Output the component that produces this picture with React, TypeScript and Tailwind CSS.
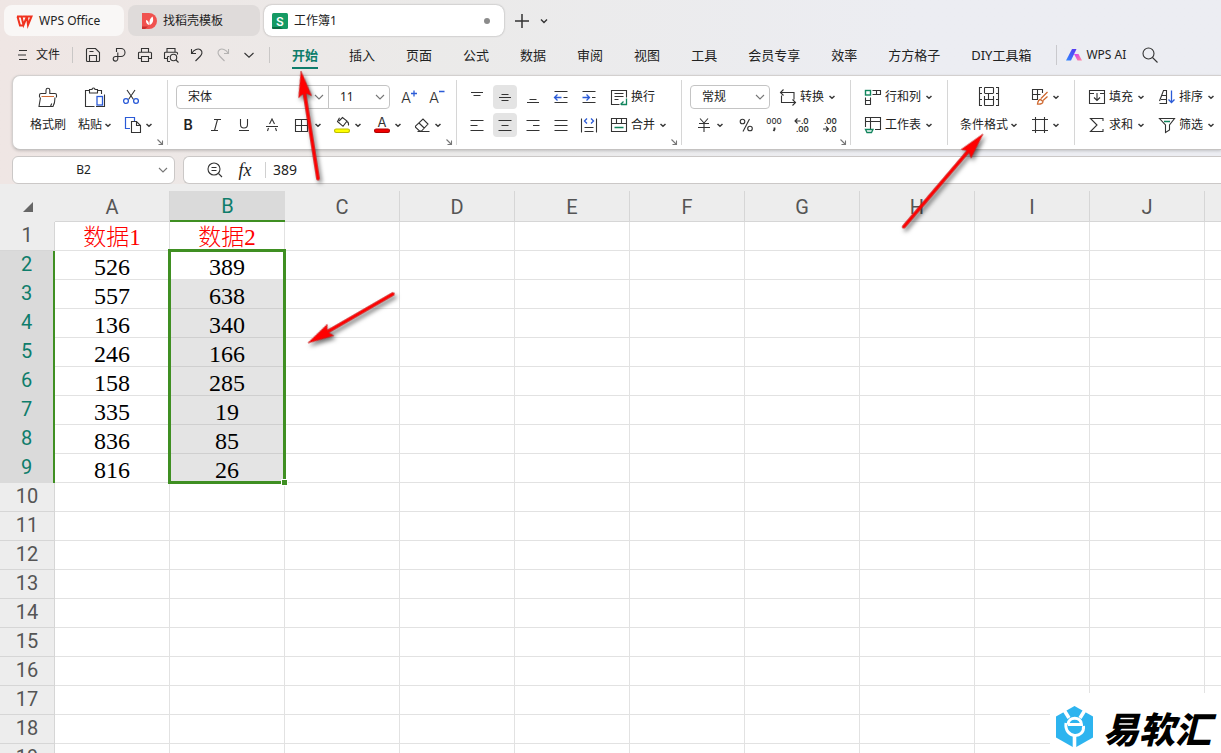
import { ReactNode } from "react";

function Svg({ w = 16, h = 16, children, className = "" }: { w?: number; h?: number; children: ReactNode; className?: string }) {
  return (
    <svg
      width={w}
      height={h}
      viewBox={`0 0 ${w} ${h}`}
      fill="none"
      stroke="#333"
      strokeWidth="1.1"
      className={`block shrink-0 overflow-visible ${className}`}
      aria-hidden="true"
    >
      {children}
    </svg>
  );
}

const Caret = () => (
  <Svg w={8} h={8}>
    <path d="M1.5 3 4 5.3 6.5 3" stroke="#3a3a3a" strokeWidth="1.5" />
  </Svg>
);

const WideCaret = () => (
  <Svg w={10} h={6}>
    <path d="M1 1l4 4 4-4" stroke="#777" />
  </Svg>
);

const Corner = () => (
  <button aria-label="更多设置" className="absolute right-1 bottom-0">
    <Svg w={6} h={6}>
      <path d="M.5.5l5 5M5.5 1.5v4h-4" stroke="#777" />
    </Svg>
  </button>
);

const BLUE = "#2b5bd7";
const GREEN = "#10845c";
const ORANGE = "#cf6a32";

/* ---------- quick access icons ---------- */

const quickIcons: [string, ReactNode][] = [
  ["保存", <path key="a" d="M1.5 2.5a1 1 0 0 1 1-1h8l4 4v8a1 1 0 0 1-1 1h-11a1 1 0 0 1-1-1zM4.5 14V8.5h7V14M4.5 4.5h4" />],
  ["输出", <path key="a" d="M5.5 5V1.5h4.5a4 4 0 0 1 0 8H4.500a2.300 2.300 0 1 0 2.300 2.300V5.500" />],
  ["打印", <path key="a" d="M4.500 5V1.500h7V5M4.500 11.500h-3V6.200a1 1 0 0 1 1-1h11a1 1 0 0 1 1 1v5.300h-3M4.500 9.500h7v5h-7z" />],
  [
    "打印预览",
    <g key="a">
      <path d="M4 5V1.500h8V5M4.500 11.500h-3V6.200a1 1 0 0 1 1-1h11a1 1 0 0 1 1 1v1.300M4.500 14.500h2.500M4.500 9.500v5M4.500 9.500h1.800" />
      <circle cx="10.500" cy="10.500" r="3.200" />
      <path d="M13 13l2.500 2.500" />
    </g>,
  ],
  ["撤销", <path key="a" d="M2.500 2v4.500H7M2.800 6.200C5 2.500 9 1 11.500 2.800c2.500 2 1.500 4.700-.500 6.700L6.500 14" />],
  ["恢复", <path key="a" stroke="#b5b3b2" d="M13.500 2v4.500H9M13.200 6.200C11 2.500 7 1 4.500 2.800 2 4.800 3 7.500 5 9.500L9.500 14" />],
  ["自定义", <path key="a" d="M3.500 6L8 10.200 12.500 6" />],
];

/* ---------- ribbon pieces ---------- */

function Tool({ label, children, active = false }: { label: string; children: ReactNode; active?: boolean }) {
  return (
    <button
      aria-label={label}
      className={`mx-0.5 flex size-6 shrink-0 items-center justify-center rounded ${active ? "bg-[#e4e4e4]" : ""}`}
    >
      {children}
    </button>
  );
}

function DropTool({ label, children }: { label: string; children: ReactNode }) {
  return (
    <button aria-label={label} className="flex h-6 w-10 shrink-0 items-center gap-1 pl-1">
      {children}
      <Caret />
    </button>
  );
}

function TextTool({ icon, label, caret = true }: { icon: ReactNode; label: string; caret?: boolean }) {
  return (
    <button className="flex h-6 shrink-0 items-center gap-1 whitespace-nowrap">
      {icon}
      <span>{label}</span>
      {caret && <Caret />}
    </button>
  );
}

function Group({ children, corner = false, last = false, className = "" }: { children: ReactNode; corner?: boolean; last?: boolean; className?: string }) {
  return (
    <div className={`relative my-1 flex shrink-0 pt-[3px] ${last ? "" : "border-r border-[#d6d6d6]"} ${className}`}>
      {children}
      {corner && <Corner />}
    </div>
  );
}

const Row = ({ children, className = "" }: { children: ReactNode; className?: string }) => (
  <div className={`flex h-7 items-center ${className}`}>{children}</div>
);

function Select({ label, value, className }: { label: string; value: string; className: string }) {
  return (
    <div className={`relative h-6 shrink-0 border border-[#c4c4c4] ${className}`}>
      <select aria-label={label} defaultValue={value} className="h-full w-full appearance-none bg-transparent pl-[11px] leading-5 outline-none">
        <option>{value}</option>
      </select>
      <span className="pointer-events-none absolute top-2 right-1">
        <WideCaret />
      </span>
    </div>
  );
}

const glyph = "fill-[#333] stroke-none font-['Inter',sans-serif]";

function Ribbon() {
  return (
    <section
      aria-label="开始"
      className="ml-3 flex h-[75px] shrink-0 overflow-hidden rounded-l-lg border border-r-0 border-[#d3d0cf] border-b-[#c4c2c1] bg-white text-xs text-[#222] shadow-[0_1px_3px_rgba(0,0,0,0.18)]"
    >
      <Group corner className="w-[155px] pl-[11px]">
        <button className="flex w-12 flex-col items-center gap-2 self-start pt-1">
          <Svg w={20} h={20}>
            <path d="M8 6.500V3.200a1.900 1.900 0 0 1 3.800 0v3.300h5.200a1.500 1.500 0 0 1 1.500 1.500v2.500M8 6.500H3A1.500 1.500 0 0 0 1.500 8v2.500M2.500 10.500L1 19.500h14c1.500-2.500 2-6 2-9M12.500 19.500l1.200-3" />
            <path d="M3.500 9.500h12.500" stroke={ORANGE} />
          </Svg>
          <span className="leading-5">格式刷</span>
        </button>
        <button className="flex w-[46px] flex-col items-center gap-2 self-start pt-1">
          <Svg w={20} h={20}>
            <path d="M4 3.500H.5v16h9M13 3.500h3.500V7M4.500 2.500h2.500a1.500 1.500 0 0 1 3 0h2.500v3.500h-8zM19.500 7.500v12H11" />
            <rect x="12" y="9.500" width="5.500" height="8.500" stroke={BLUE} strokeWidth="1.300" />
          </Svg>
          <span className="flex items-center gap-0.5 leading-5">
            粘贴
            <Caret />
          </span>
        </button>
        <div className="pl-[5px]">
          <Row>
            <button aria-label="剪切">
              <Svg>
                <path d="M4 1l6.500 9.500M12 1L5.500 10.500" />
                <circle cx="3" cy="12" r="2.400" stroke={BLUE} strokeWidth="1.300" />
                <circle cx="13" cy="12" r="2.400" stroke={BLUE} strokeWidth="1.300" />
              </Svg>
            </button>
          </Row>
          <Row>
            <button aria-label="复制" className="flex items-center gap-1 pl-0.5">
              <Svg>
                <path d="M5 11.500H.5V.5h9V4" stroke={BLUE} strokeWidth="1.200" />
                <path d="M6.500 4.500h5l4 4v7h-9zM11.500 4.500v4h4" />
              </Svg>
              <Caret />
            </button>
          </Row>
        </div>
      </Group>

      <Group corner className="w-[289px] pl-1.5">
        <div>
          <Row>
            <Select label="字体" value="宋体" className="ml-0.5 w-[153px] rounded-l" />
            <Select label="字号" value="11" className="-ml-px w-[62px] rounded-r" />
            <button aria-label="增大字号" className="ml-3">
              <Svg>
                <text x="-1" y="14" fontSize="15" className={`${glyph} font-light`}>A</text>
                <path d="M9 4.500h6M12 1.500v6" stroke={BLUE} strokeWidth="1.300" />
              </Svg>
            </button>
            <button aria-label="减小字号" className="ml-3">
              <Svg>
                <text x="-1" y="14" fontSize="15" className={`${glyph} font-light`}>A</text>
                <path d="M9 2.500h5.500" stroke={BLUE} strokeWidth="1.300" />
              </Svg>
            </button>
          </Row>
          <Row>
            <Tool label="加粗"><span className="font-['Inter',sans-serif] text-sm font-semibold">B</span></Tool>
            <Tool label="倾斜">
              <Svg><path d="M6 2.500h7M3 13.500h7M9.500 2.500l-3 11" /></Svg>
            </Tool>
            <Tool label="下划线">
              <Svg><path d="M4.500 2v5.500a3.500 3.500 0 0 0 7 0V2M3 13.500h10" /></Svg>
            </Tool>
            <Tool label="删除线">
              <Svg><path d="M2 9.500h12M5.500 7L8 2l2.500 5M4.500 11l-1 3M11.500 11l1 3" /></Svg>
            </Tool>
            <span className="w-1" />
            <DropTool label="边框">
              <Svg><path d="M1.500 2.500h12v12h-12zM7.500 2.500v12M1.500 8.500h12" /></Svg>
            </DropTool>
            <DropTool label="填充颜色">
              <Svg>
                <path d="M5.500.8L3.500 4.500l5.500 4.800 4-5.300-4.500-3.500L5 4M12.800 4.500c1.500.500 2 2 1.700 4" />
                <rect x=".5" y="12" width="15" height="3.500" rx="1.700" fill="#ff0" stroke="#bdbd00" />
              </Svg>
            </DropTool>
            <DropTool label="字体颜色">
              <Svg>
                <text x="8" y="10" fontSize="13" textAnchor="middle" className={glyph}>A</text>
                <rect x=".5" y="12" width="15" height="3.500" rx="1.700" fill="#f00000" stroke="#b00000" />
              </Svg>
            </DropTool>
            <DropTool label="清除">
              <Svg>
                <path d="M1.500 9.200L9 2l5 5-6.500 7H5.500L1.500 10.200zM5 6l5.200 5M3.500 14.500h12" />
              </Svg>
            </DropTool>
          </Row>
        </div>
      </Group>

      <Group corner className="w-[225px] pl-1.5">
        <div>
          <Row>
            <Tool label="顶端对齐"><Svg><path d="M2 3.500h12M4.500 6.500h7" /></Svg></Tool>
            <Tool label="垂直居中" active><Svg><path d="M4.500 5.500h7M2 8.500h12M4.500 11.500h7" /></Svg></Tool>
            <Tool label="底端对齐"><Svg><path d="M4.500 10.500h7M2 13.500h12" /></Svg></Tool>
            <Tool label="减少缩进">
              <Svg>
                <path d="M1.500 2.500h13M1.500 13.500h13M10.500 8.500h4" />
                <path d="M8.500 8.500h-7M4.500 5.500l-3 3 3 3" stroke={BLUE} strokeWidth="1.300" />
              </Svg>
            </Tool>
            <Tool label="增加缩进">
              <Svg>
                <path d="M1.500 2.500h13M1.500 13.500h13M11 8.500h3.500" />
                <path d="M1.500 8.500h7M5.500 5.500l3 3-3 3" stroke={BLUE} strokeWidth="1.300" />
              </Svg>
            </Tool>
            <span className="w-2" />
            <TextTool
              label="换行"
              caret={false}
              icon={
                <Svg>
                  <path d="M8.500 15.500H.5v-14h15v7M3.500 4.500h9M3.500 7.500h9M3.500 10.500h4" />
                  <path d="M15.500 9.500v6H10M12.500 12.500L9.500 15.500" stroke={GREEN} strokeWidth="1.300" />
                </Svg>
              }
            />
          </Row>
          <Row>
            <Tool label="左对齐"><Svg><path d="M1.500 3.500h13M1.500 8.500h7M1.500 13.500h13" /></Svg></Tool>
            <Tool label="居中对齐" active><Svg><path d="M1.500 3.500h13M4.500 8.500h7M1.500 13.500h13" /></Svg></Tool>
            <Tool label="右对齐"><Svg><path d="M1.500 3.500h13M8 8.500h6.500M1.500 13.500h13" /></Svg></Tool>
            <Tool label="两端对齐"><Svg><path d="M1.500 3.500h13M1.500 8.500h13M1.500 13.500h13" /></Svg></Tool>
            <Tool label="分散对齐">
              <Svg>
                <path d="M.5 1.500v14M15.500 1.500v14M3.500 10.500h9M3.500 14.500h9" />
                <path d="M6 1.500L3.500 4 6 6.500M10 1.500L12.500 4 10 6.500" stroke={BLUE} strokeWidth="1.300" />
              </Svg>
            </Tool>
            <span className="w-2" />
            <TextTool
              label="合并"
              icon={
                <Svg>
                  <path d="M.5 1.500h15v13H.5zM.5 6.500h15M5.500 1.500v5M10.500 1.500v5" />
                  <path d="M3.500 10.500h9" stroke={GREEN} strokeWidth="1.300" />
                </Svg>
              }
            />
          </Row>
        </div>
      </Group>

      <Group corner className="w-[169px] pl-2">
        <div>
          <Row className="gap-2.5">
            <Select label="数字格式" value="常规" className="w-20 rounded" />
            <TextTool
              label="转换"
              icon={
                <Svg>
                  <path d="M3.500.5l-3 3 3 3M.5 3.500h13.500v7M1.500 6.500v7h13.500M12.500 10.500l3 3-3 3" />
                </Svg>
              }
            />
          </Row>
          <Row>
            <button aria-label="货币" className="mr-1 flex h-6 items-center gap-1 pl-1.5">
              <Svg>
                <path d="M4 1.500l4 4.500 4-4.500M3 6.500h10M2 10.500h12M8 6v9" />
              </Svg>
              <Caret />
            </button>
            <span className="w-1" />
            <Tool label="百分比">
              <Svg>
                <circle cx="4.500" cy="4.500" r="2.300" />
                <circle cx="12" cy="11.500" r="2.300" />
                <path d="M11.500 2L5 14.500" />
              </Svg>
            </Tool>
            <Tool label="千位分隔">
              <Svg>
                <text x="8" y="7" fontSize="8" textAnchor="middle" className={`${glyph} font-medium`}>000</text>
                <path d="M8.500 10.500v2l-1 1.500" strokeWidth="1.800" />
              </Svg>
            </Tool>
            <Tool label="增加小数位">
              <Svg>
                <path d="M6.500 4H1M3.500 1.500L1 4 3.500 6.500" />
                <text x="7" y="7" fontSize="8" className={`${glyph} font-semibold`}>.0</text>
                <text x="2" y="15" fontSize="8" className={`${glyph} font-semibold`}>.00</text>
              </Svg>
            </Tool>
            <Tool label="减少小数位">
              <Svg>
                <text x="2" y="7" fontSize="8" className={`${glyph} font-semibold`}>.00</text>
                <path d="M1 12h5.500M4 9.500L6.500 12 4 14.500" />
                <text x="7" y="15" fontSize="8" className={`${glyph} font-semibold`}>.0</text>
              </Svg>
            </Tool>
          </Row>
        </div>
      </Group>

      <Group className="w-[97px] pl-3.5">
        <div>
          <Row>
            <TextTool
              label="行和列"
              icon={
                <Svg>
                  <path d="M7.500 1.500h8v4h-8M11.500 1.500v4M.5 8.500v7h5v-7M.5 11.500h5" />
                  <rect x=".5" y="1.500" width="5" height="4.500" stroke={GREEN} strokeWidth="1.400" />
                </Svg>
              }
            />
          </Row>
          <Row>
            <TextTool
              label="工作表"
              icon={
                <Svg>
                  <path d="M.5 10V.5h15v12H10M.5 4.500h15M5.500.5v12" />
                  <path d="M.5 12.500h7.500l-1.500 3H2z" stroke={GREEN} strokeWidth="1.300" />
                </Svg>
              }
            />
          </Row>
        </div>
      </Group>

      <Group className="w-[127px] pl-3">
        <button className="flex flex-col items-center gap-2 self-start pt-1">
          <Svg w={20} h={20}>
            <path d="M3 .5H.5v18H3M17 .5h2.500v18H17M5.500.5h9M5.500 18.500h9M5.500.5v5.500M14.500.5v5.500M5.500 6.500h9M.5 6.500h2.500M17 6.500h2.500M9.500 6.500v6M5.500 9v9.500M14.500 9v9.500M5.500 12.500h9M.5 12.500h2.500M17 12.500h2.500" />
          </Svg>
          <span className="flex items-center gap-0.5 leading-5">
            条件格式
            <Caret />
          </span>
        </button>
        <div className="pl-2.5">
          <Row>
            <DropTool label="表格样式">
              <Svg>
                <path d="M6 10.500H.5v-10h10V4M.5 5.500h8M5.500.5v10" />
                <path d="M15.500 3L9 9.500M15.500 7.500L11 11.500M8.500 10.500c-2 0-2.500 1.500-3 4.500 3 .500 5.500-.5 5.500-2.500z" stroke={ORANGE} strokeWidth="1.300" />
              </Svg>
            </DropTool>
          </Row>
          <Row>
            <DropTool label="行列边距">
              <Svg><path d="M3.500 0v16M12.500 0v16M0 2.500h16M0 13.500h16" /></Svg>
            </DropTool>
          </Row>
        </div>
      </Group>

      <Group last className="gap-3.5 pl-3.5">
        <div>
          <Row>
            <TextTool label="填充" icon={<Svg><path d="M5 4.500H.5v-3h15v3H11M.5 4.500v10h15v-10M8 4v7M5 8.500l3 3 3-3" /></Svg>} />
          </Row>
          <Row>
            <TextTool label="求和" icon={<Svg><path d="M14 4V1.500H1.500L8 8l-6.500 6.500H14V12" /></Svg>} />
          </Row>
        </div>
        <div>
          <Row>
            <TextTool
              label="排序"
              icon={
                <Svg>
                  <path d="M.5 14.500h7V1.500H4.500L.5 12M3 6.500h4.500M2 10.500h5.500" />
                  <path d="M12.500 1.500v12M9.500 10.500l3 3 3-3" stroke={BLUE} strokeWidth="1.300" />
                </Svg>
              }
            />
          </Row>
          <Row>
            <TextTool
              label="筛选"
              icon={
                <Svg>
                  <path d="M.5 1.500h15L10.500 8v5l-4 2.500V8z" />
                  <path d="M5 4.500h6" stroke={GREEN} strokeWidth="1.300" />
                </Svg>
              }
            />
          </Row>
        </div>
      </Group>
    </section>
  );
}

/* ---------- sheet ---------- */

const columns = ["A", "B", "C", "D", "E", "F", "G", "H", "I", "J"];
const data: [string, string][] = [
  ["数据1", "数据2"],
  ["526", "389"],
  ["557", "638"],
  ["136", "340"],
  ["246", "166"],
  ["158", "285"],
  ["335", "19"],
  ["836", "85"],
  ["816", "26"],
];
const rows = Array.from({ length: 19 }, (_, i) => i + 1);

function Sheet() {
  return (
    <main className="relative min-h-0 flex-1 overflow-hidden bg-[#ededed] pt-[7px]">
      <table className="w-full table-fixed border-separate border-spacing-0">
        <colgroup>
          <col className="w-[55px]" />
          {columns.map((c) => (
            <col key={c} className="w-[115px]" />
          ))}
          <col />
        </colgroup>
        <thead className="font-['Roboto',sans-serif] text-xl leading-7 text-[#555]">
          <tr className="h-[31px]">
            <td>
              <Svg w={10} h={10} className="ml-[23px]">
                <path d="M10 0v10H0z" fill="#666" stroke="none" />
              </Svg>
            </td>
            {columns.map((c) => (
              <th
                key={c}
                scope="col"
                className={`p-0 font-normal ${c === "B" ? "border-b-2 border-[#3f8f22] bg-[#dadada] pt-px text-[#0e7d6b]" : "border-r border-b border-[#d6d6d6] pt-px"}`}
              >
                {c}
              </th>
            ))}
            <td className="border-b border-[#d6d6d6]" />
          </tr>
        </thead>
        <tbody>
          {rows.map((r) => {
            const selected = r >= 2 && r <= 9;
            const values = data[r - 1];
            return (
              <tr key={r} className="h-[29px]">
                <th
                  scope="row"
                  className={`p-0 font-['Roboto',sans-serif] text-xl font-normal ${
                    selected
                      ? "border-r-2 border-[#3f8f22] bg-[#dadada] pb-0.5 leading-[27px] text-[#0e7d6b]"
                      : "border-r border-b border-[#d6d6d6] pb-0.5 leading-[26px] text-[#555]"
                  }`}
                >
                  {r}
                </th>
                {columns.map((c, i) => (
                  <td
                    key={c}
                    className={`border-r border-b p-0 pt-1 text-center font-['Liberation_Serif','Noto_Sans_CJK_SC',serif] leading-6 ${
                      selected && c === "B" && r > 2 ? "border-[#cfcfcf] bg-[#e4e4e4]" : "border-[#e2e2e2] bg-white"
                    } ${r === 1 ? "text-[23px] font-light text-[#f00]" : "text-2xl text-black"}`}
                  >
                    {values && i < 2 ? values[i] : null}
                  </td>
                ))}
                <td className="border-b border-[#e2e2e2] bg-white" />
              </tr>
            );
          })}
        </tbody>
      </table>
      <div className="pointer-events-none absolute top-[65px] left-[168px] h-[235px] w-[118px] border-3 border-[#3f8f22]">
        <span className="absolute -right-[5px] -bottom-[5px] box-content size-[5px] border border-white bg-[#3f8f22]" />
      </div>
      <div className="absolute right-0 bottom-0 flex h-[60px] items-center gap-2.5 bg-white pt-2 pr-2.5 pl-1.5">
        <svg width="37" height="42" viewBox="0 0 37 42" fill="none" aria-hidden="true">
          <path d="M18.500 0L37 10.500v21L18.500 42 0 31.500v-21z" fill="#2db4ef" />
          <path d="M8 4l5 8M29 4l-5 8M18.500 29v13" stroke="#fff" strokeWidth="3.600" />
          <path d="M10 17c-2 16 19 16 17.500 3" stroke="#fff" strokeWidth="3" />
          <path d="M12 18.500h13.500c-.5-8.500-13-8.500-13.500 0" stroke="#fff" strokeWidth="3" />
          <path d="M12.500 22.500h12" stroke="#2db4ef" strokeWidth="1.500" />
        </svg>
        <span className="font-['Noto_Sans_CJK_SC',sans-serif] text-4xl leading-9 font-black text-black italic">易软汇</span>
      </div>
    </main>
  );
}

/* ---------- annotation arrows ---------- */

const arrows = [
  { x: 301, y: 71, angle: 81, length: 110 },
  { x: 983, y: 134, angle: 130.500, length: 123 },
  { x: 308, y: 343, angle: -30, length: 99 },
];

function Arrows() {
  return (
    <svg width="1221" height="753" className="pointer-events-none absolute top-0 left-0" aria-hidden="true">
      <g className="drop-shadow-[2px_3px_2px_rgba(0,0,0,0.55)]">
        {arrows.map((a) => (
          <path
            key={a.x}
            transform={`translate(${a.x} ${a.y}) rotate(${a.angle})`}
            d={`M0 0L26-6.500 23-1.500H${a.length - 1}a1.500 1.500 0 0 1 0 3H23L26 6.500z`}
            fill="#f00"
            stroke="#c01010"
            strokeWidth=".5"
          />
        ))}
      </g>
    </svg>
  );
}

const menu = ["开始", "插入", "页面", "公式", "数据", "审阅", "视图", "工具", "会员专享", "效率", "方方格子", "DIY工具箱"];

export default function App() {
  return (
    <div className="relative flex h-screen flex-col overflow-hidden bg-linear-to-r from-[#efe6e4] via-[#ebeae9] via-35% to-[#ecedf2] to-75% font-['Noto_Sans','Noto_Sans_CJK_SC',sans-serif] text-[#222]">
      <header>
        <nav aria-label="文档" className="flex h-9 items-end gap-1 pl-1 text-xs">
          <button className="flex h-[31px] w-[120px] items-center gap-1.5 rounded-lg bg-[#f9f7f6] pl-3">
            <Svg w={17} h={12}>
              <path d="M1 1.500h4.500l2 8.500 3.500-8.500M6.500 1.500H11l1 8.500 3.500-8.500H12M1.500 1.500L4 10.500h3" stroke="#f0321e" strokeWidth="2" />
            </Svg>
            WPS Office
          </button>
          <button className="flex h-[31px] w-[132px] items-center gap-1.5 rounded-lg bg-[#dfdbda] pl-3.5">
            <Svg w={15} h={16}>
              <path d="M0 0h7a8 8 0 0 1 0 16H0z" fill="#f0524f" stroke="none" />
              <path d="M0 13.500h6l-3 2.500H0z" fill="#c9302e" stroke="none" />
              <path d="M7 12C4 11 4 8.500 4 7c2 .5 3 2 3 5zM7.500 12C7 8 8 5 10.500 3.500 12 7 11 11 7.500 12z" fill="#fff" stroke="none" />
            </Svg>
            找稻壳模板
          </button>
          <button className="flex h-[31px] w-60 items-center gap-1.5 rounded-lg bg-white pl-2 shadow-[0_0_2px_rgba(0,0,0,0.35)]">
            <Svg>
              <rect width="16" height="16" rx="1.500" fill="#159a64" stroke="none" />
              <path d="M0 14h8l3 2H1.500A1.500 1.500 0 0 1 0 14.500z" fill="#0b6b43" stroke="none" />
              <text x="8" y="12.500" fontSize="12" textAnchor="middle" className="fill-white stroke-none font-['Inter',sans-serif] font-semibold">S</text>
            </Svg>
            工作簿1
            <span className="mr-3.5 ml-auto size-1.5 rounded-full bg-[#8b8b8b]" />
          </button>
          <button aria-label="新建" className="flex h-[31px] w-7 items-center justify-center">
            <Svg w={14} h={14}><path d="M7 0v14M0 7h14" strokeWidth="1.500" /></Svg>
          </button>
          <button aria-label="标签列表" className="flex h-[31px] items-center">
            <Svg w={8} h={8}><path d="M1 2.500l3 3 3-3" strokeWidth="1.400" /></Svg>
          </button>
        </nav>
        <div className="flex h-[39px] items-center pb-0.5 text-[13px] whitespace-nowrap">
          <button className="flex items-center gap-2 pl-[18px] text-xs">
            <Svg w={10} h={12}><path d="M1 1.500h8M0 6h8M1 10.500h8" /></Svg>
            文件
          </button>
          <span className="ml-3 h-4 w-px bg-[#c9c7c6]" />
          <div className="ml-3 flex gap-2.5">
            {quickIcons.map(([label, icon]) => (
              <button key={label} aria-label={label}>
                <Svg>{icon}</Svg>
              </button>
            ))}
          </div>
          <span className="ml-3 h-4 w-px bg-[#c9c7c6]" />
          <nav aria-label="功能区" className="ml-[22px] flex gap-[31px]">
            {menu.map((m) => (
              <button key={m} className={`h-7 border-b-2 pt-0.5 leading-6 ${m === "开始" ? "border-[#0e7d6b] font-bold text-[#0e7d6b]" : "border-transparent"}`}>
                {m}
              </button>
            ))}
          </nav>
          <span className="ml-[25px] h-5 w-px bg-[#c9c9cd]" />
          <button className="flex items-center gap-1 pl-[9px] text-xs">
            <svg width="16" height="12" viewBox="0 0 16 12" aria-hidden="true">
              <defs>
                <linearGradient id="ai-left" x1="0" y1="1" x2="1" y2="0">
                  <stop offset="0" stopColor="#2f8bff" />
                  <stop offset="1" stopColor="#5a32f0" />
                </linearGradient>
                <linearGradient id="ai-right" x1="0" y1="0" x2="1" y2="1">
                  <stop offset="0" stopColor="#d63cf0" />
                  <stop offset="1" stopColor="#ff8a9a" />
                </linearGradient>
              </defs>
              <path d="M6 0h4.500L5 11.500H0z" fill="url(#ai-left)" />
              <path d="M8 5h4.500l3.500 6.500h-4.500z" fill="url(#ai-right)" />
            </svg>
            WPS AI
          </button>
          <button aria-label="搜索" className="ml-4">
            <Svg><circle cx="6.500" cy="6.500" r="5.500" /><path d="M10.500 10.500l5 5" /></Svg>
          </button>
        </div>
      </header>
      <Ribbon />
      <div className="mt-1.5 flex h-7 shrink-0 gap-2 pl-3 text-xs">
        <div className="flex w-[163px] items-center rounded-md border border-[#cbc8c7] bg-white pr-1.5">
          <input aria-label="名称框" defaultValue="B2" className="w-full min-w-0 bg-transparent pr-1 text-center outline-none" />
          <button aria-label="名称列表"><WideCaret /></button>
        </div>
        <div className="flex flex-1 items-center rounded-l-md border border-r-0 border-[#cbc8c7] bg-white pl-[23px]">
          <button aria-label="缩小">
            <Svg><circle cx="7" cy="7" r="6" /><path d="M11.500 11.500l3.500 3.500M4.500 5.500h5M4.500 8.500h5" /></Svg>
          </button>
          <button aria-label="插入函数" className="ml-3.5 w-4 font-['Liberation_Serif',serif] text-lg leading-5 italic">fx</button>
          <span className="ml-3 h-4 w-px bg-[#d0d0d0]" />
          <input aria-label="编辑栏" defaultValue="389" className="ml-[7px] min-w-0 flex-1 bg-transparent text-sm outline-none" />
        </div>
      </div>
      <Sheet />
      <Arrows />
    </div>
  );
}
